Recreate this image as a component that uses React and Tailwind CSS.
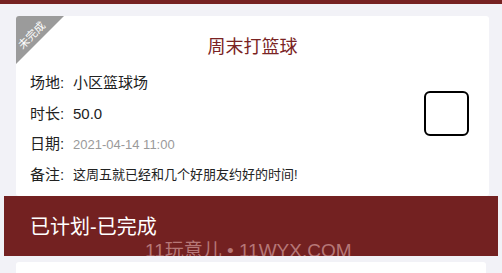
import React from 'react';

const rows = [
    { label: '场地:', value: '小区篮球场', cls: 'text-[15px] text-[#222]' },
    { label: '时长:', value: '50.0', cls: 'text-[15px] text-[#222]' },
    { label: '日期:', value: '2021-04-14 11:00', cls: 'text-[13px] text-[#9a9a9a]' },
    { label: '备注:', value: '这周五就已经和几个好朋友约好的时间!', cls: 'text-[13px] text-[#222]' },
];

const App = () => {
    return (
        <div className="w-[502px] h-[273px] overflow-hidden bg-[#f2f2f7]" style={{ fontFamily: '"Liberation Sans", "Noto Sans CJK SC", sans-serif' }}>
            <div className="h-[4px] bg-[#762222]" />

            {/* Task card */}
            <div className="relative mx-[16px] mt-[12px] w-[473px] h-[180px] bg-white rounded-[3px] overflow-hidden">
                <div className="absolute left-0 top-0 w-[48px] h-[48px] bg-[#9b9b9b] [clip-path:polygon(0_0,100%_0,0_100%)]" />
                <div className="absolute left-[-1px] top-[14px] w-[34px] text-center -rotate-45 text-white text-[11px] leading-[11px]">未完成</div>

                <div className="pt-[19px] text-center text-[18px] leading-[24px] text-[#7a2323]">周末打篮球</div>

                <div className="flex items-center">
                    <div className="flex-1 pl-[14px] pt-[9px] flex flex-col">
                        {rows.map((r, i) => (
                            <div key={i} className="flex items-center h-[30.5px]">
                                <span className="w-[43px] text-[15px] text-[#222]">{r.label}</span>
                                <span className={r.cls}>{r.value}</span>
                            </div>
                        ))}
                    </div>
                    <div className="mr-[20px] mt-[-23px] w-[45px] h-[45px] border-[2.5px] border-black rounded-[6px]" />
                </div>
            </div>

            {/* Status banner */}
            <div className="relative mx-[4px] h-[60px] bg-[#732121] overflow-hidden flex items-center pl-[26px]">
                <span className="text-white text-[20px] leading-none mt-[1px]">已计划-已完成</span>
                <span className="absolute left-[141px] top-[45px] text-[19px] leading-none text-[#b67777] whitespace-nowrap">11玩意儿 • 11WYX.COM</span>
            </div>

            <div className="mx-[16px] mt-[6px] h-[20px] bg-white rounded-[3px]" />
        </div>
    );
};

export default App;
